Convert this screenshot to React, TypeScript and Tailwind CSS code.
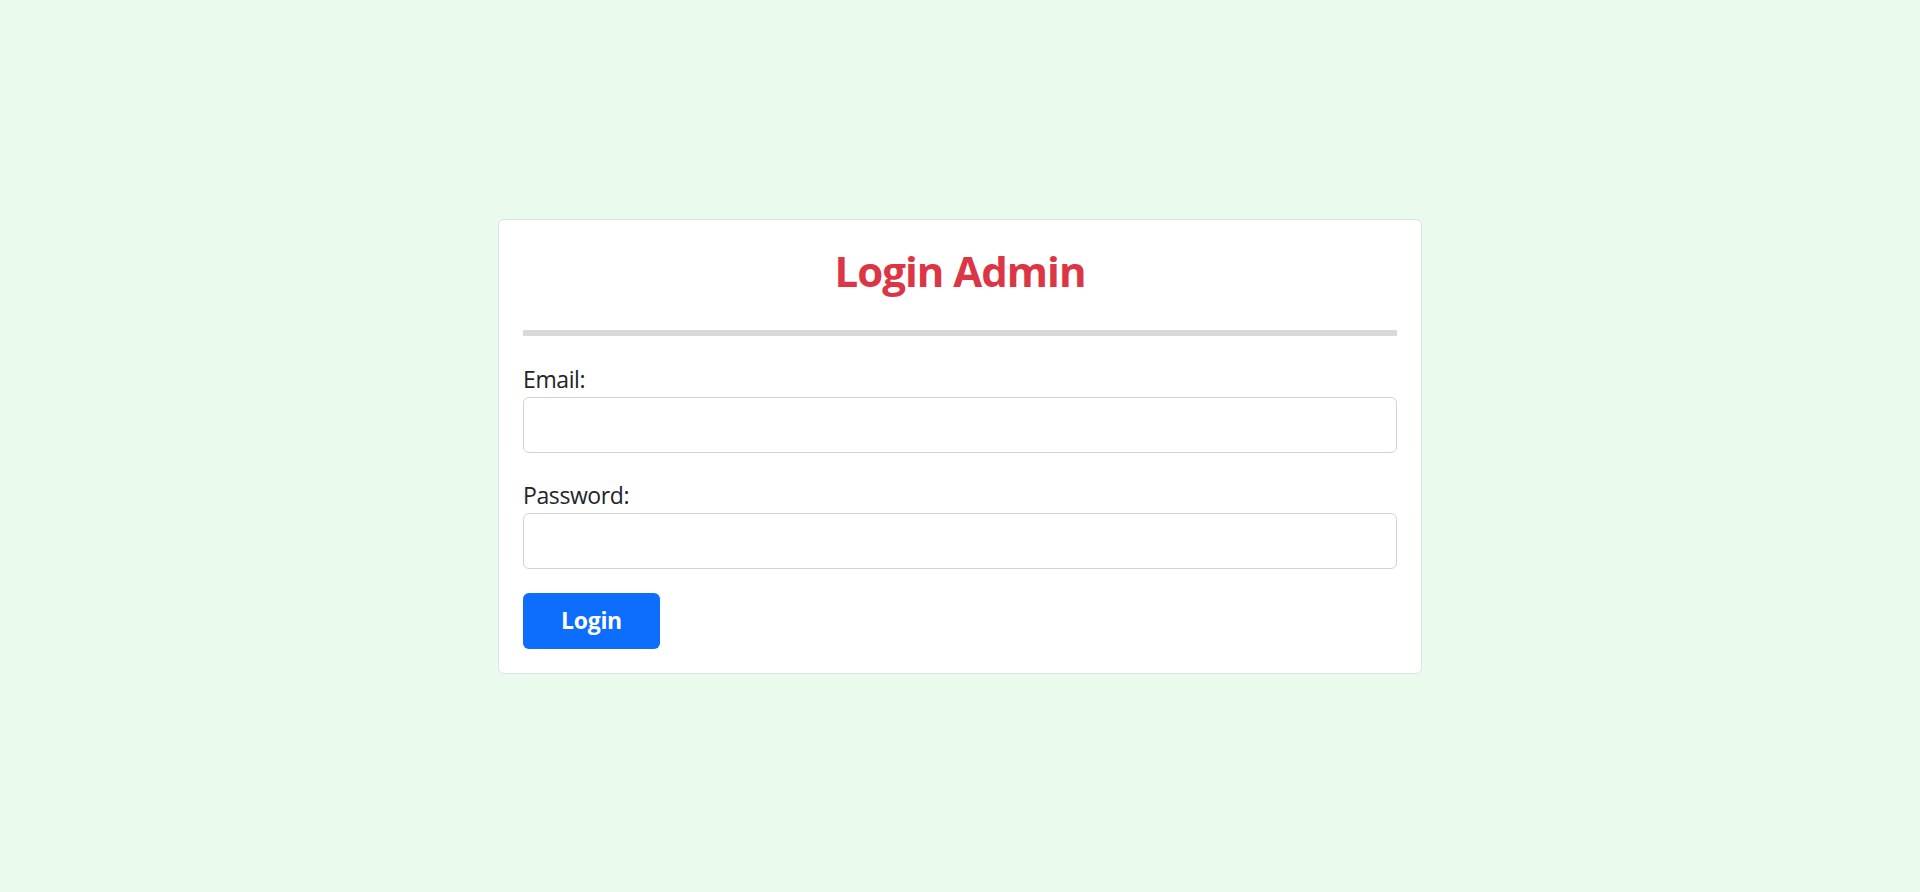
import React from "react";

export default function App() {
  return (
    <div className="min-h-screen w-full bg-[#eafaec] flex items-center justify-center font-['Open_Sans','Noto_Sans',sans-serif] text-[#212529]">
      <div className="w-[924px] bg-white border border-[#dee2e6] rounded-[6px] p-6">
        <h2 className="text-center text-[#dc3545] font-bold text-[42px] leading-[53px] tracking-[-1px]">
          Login Admin
        </h2>
        <hr className="border-0 h-[6px] bg-[#d9d9d9] mt-[33px] mb-[25px]" />
        <form onSubmit={(e) => e.preventDefault()}>
          <label htmlFor="email" className="block text-[23px] leading-[36px] tracking-[-0.4px]">
            Email:
          </label>
          <input
            id="email"
            type="email"
            className="block w-full h-[56px] border border-[#ced4da] rounded-[6px] bg-white px-4 text-[23px] outline-none"
          />
          <label htmlFor="password" className="block text-[23px] leading-[36px] tracking-[-0.4px] mt-6">
            Password:
          </label>
          <input
            id="password"
            type="password"
            className="block w-full h-[56px] border border-[#ced4da] rounded-[6px] bg-white px-4 text-[23px] outline-none"
          />
          <button
            type="submit"
            className="mt-6 w-[137px] h-[56px] rounded-[6px] bg-[#0d6efd] text-white font-bold text-[23px] leading-none tracking-[-0.3px] flex items-center justify-center"
          >
            Login
          </button>
        </form>
      </div>
    </div>
  );
}
